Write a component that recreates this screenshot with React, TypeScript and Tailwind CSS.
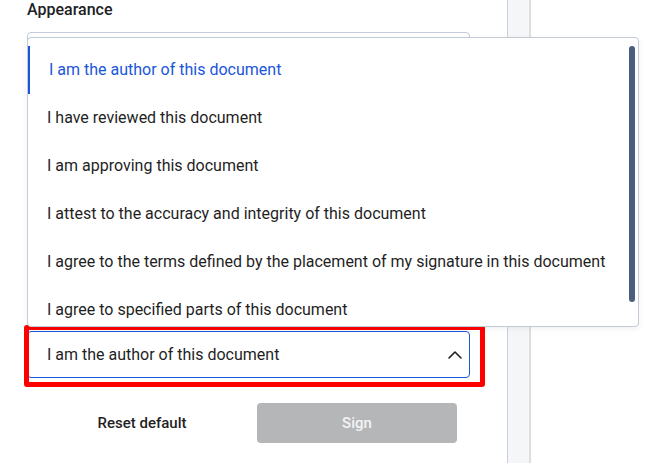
import React from 'react';
import { ChevronUp } from 'lucide-react';

const reasons = [
  'I am the author of this document',
  'I have reviewed this document',
  'I am approving this document',
  'I attest to the accuracy and integrity of this document',
  'I agree to the terms defined by the placement of my signature in this document',
  'I agree to specified parts of this document',
];

export default function App() {
  const selected = 0;

  return (
    <div
      className="relative flex h-[463px] w-[667px] overflow-hidden bg-white text-[#1f1f1f]"
      style={{ fontFamily: 'Roboto, "Liberation Sans", sans-serif' }}
    >
      {/* Settings column */}
      <div className="flex w-[507px] shrink-0 flex-col pl-[27px] pr-[37px]">
        <div className="text-[16px] font-medium leading-[20px] text-[#202124]">Appearance</div>
        <div className="mt-[12px] h-[46px] w-[443px] rounded-[4px] border border-[#c3cad8]" />

        {/* Reason select */}
        <div className="relative mt-[253px]">
          <button className="flex h-[47px] w-[443px] items-center justify-between rounded-[4px] border border-[#1a56db] bg-white pl-[19px] pr-[2px] text-left text-[16px] text-[#1f1f1f]">
            <span>{reasons[selected]}</span>
            <ChevronUp size={24} strokeWidth={1.6} className="text-[#1f1f1f]" />
          </button>
          <div className="pointer-events-none absolute left-[-3px] top-[-6px] h-[62px] w-[461px] rounded-[3px] border-[5px] border-[#ff0000]" />
        </div>

        <div className="mt-[25px] flex justify-end gap-[15px] pr-[13px]">
          <button className="h-[40px] w-[200px] text-[15px] font-medium text-[#1f1f1f]">Reset default</button>
          <button className="h-[40px] w-[200px] rounded-[4px] bg-[#b5b6b8] text-[15px] font-medium text-[#f4f4f4]">Sign</button>
        </div>
      </div>

      {/* Side rail */}
      <div className="w-[24px] shrink-0 border-l border-r-2 border-l-[#c9d0dc] border-r-[#dedede] bg-[#f5f6f8]" />
      <div className="flex-1" />

      {/* Open options list */}
      <div className="absolute left-[27px] top-[37px] h-[290px] w-[612px] overflow-hidden rounded-[4px] border border-[#c3cad8] bg-white shadow-[0_2px_6px_rgba(0,0,0,0.06)]">
        <ul className="pt-[8px]">
          {reasons.map((r, i) => (
            <li
              key={r}
              className={
                i === selected
                  ? 'flex h-[48px] items-center border-l-2 border-[#1a56db] pl-[19px] text-[16px] text-[#1a56db]'
                  : 'flex h-[48px] items-center pl-[19px] text-[16px] text-[#1f1f1f]'
              }
            >
              {r}
            </li>
          ))}
        </ul>
        <div className="absolute right-[3px] top-[8px] h-[256px] w-[6px] rounded-full bg-[#4b5e7e]" />
      </div>
    </div>
  );
}
